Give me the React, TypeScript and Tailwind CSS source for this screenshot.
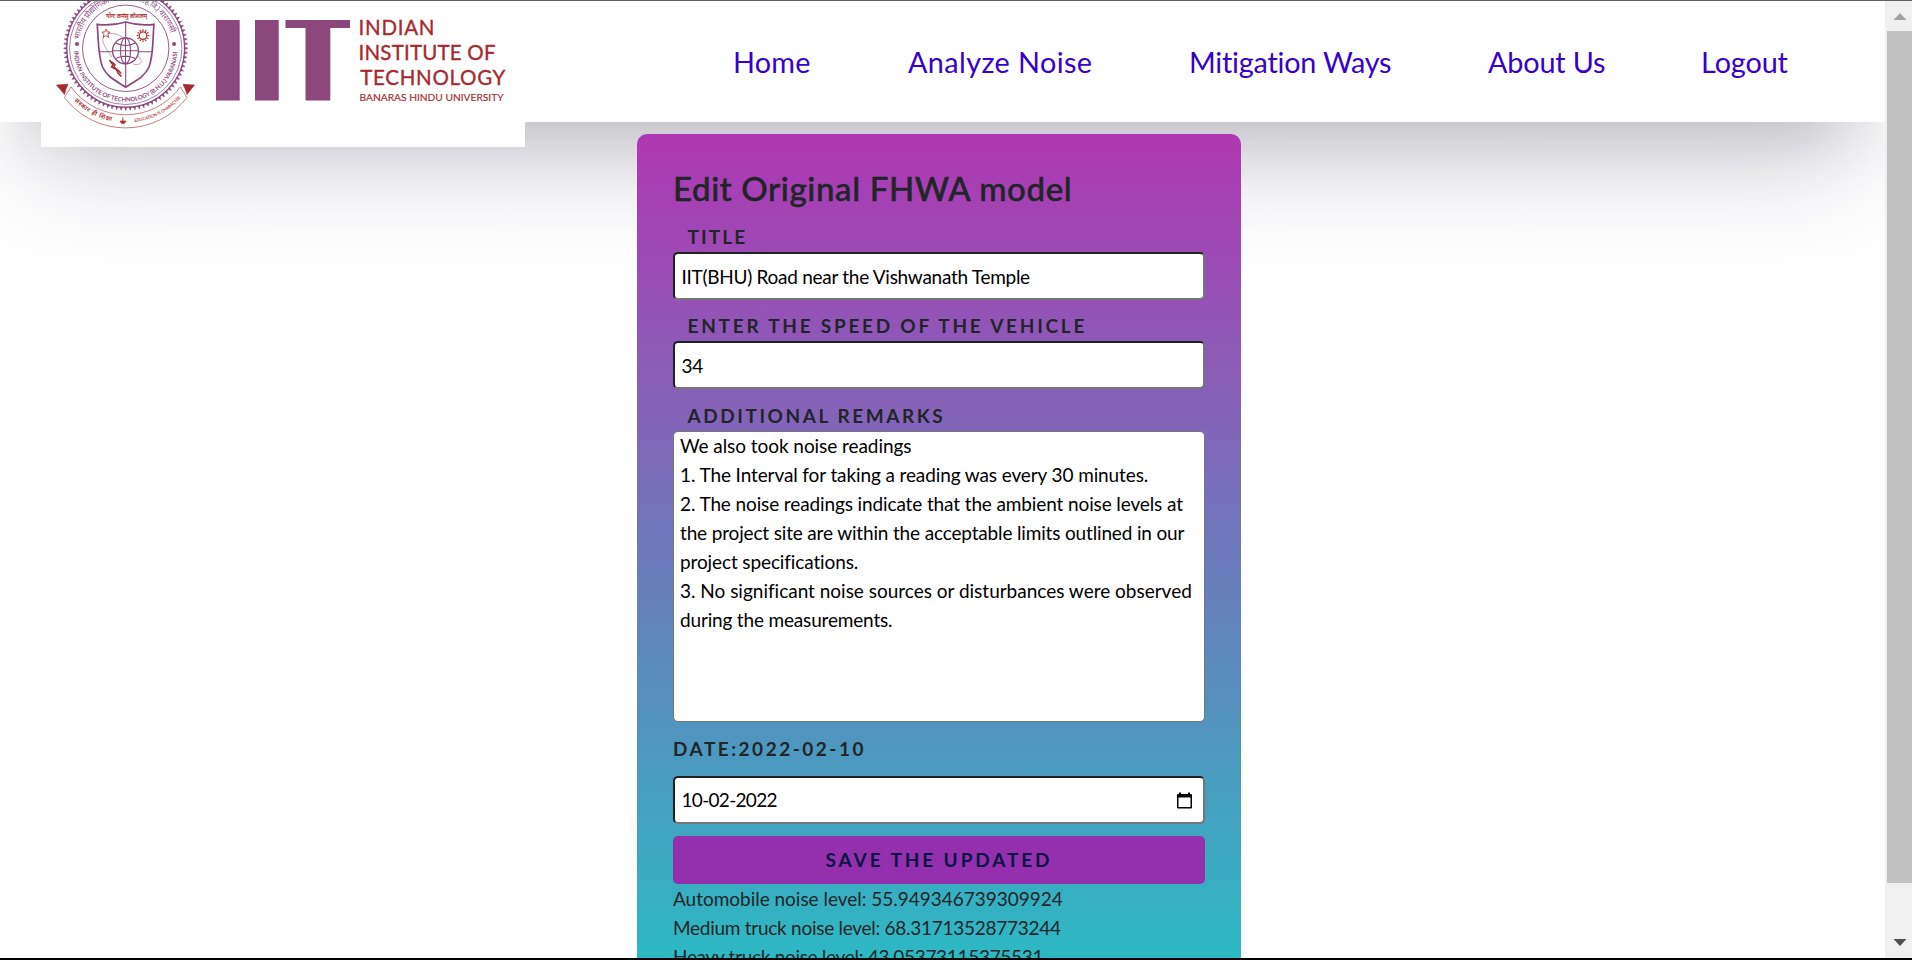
import React from "react";

const PURPLE = "#8c477c";
const RED = "#a8292d";

const navLinks = [
  { label: "Home", cls: "w-[175px] tracking-[0.2px]" },
  { label: "Analyze Noise", cls: "w-[281px] tracking-[0.4px]" },
  { label: "Mitigation Ways", cls: "w-[299px] tracking-[-0.22px]" },
  { label: "About Us", cls: "w-[213px] tracking-[-0.15px]" },
  { label: "Logout", cls: "w-[100px] tracking-[-0.1px]" },
];

const remarks = [
  { text: "We also took noise readings", cls: "tracking-[-0.06px]" },
  { text: "1. The Interval for taking a reading was every 30 minutes.", cls: "tracking-[-0.11px]" },
  { text: "2. The noise readings indicate that the ambient noise levels at", cls: "tracking-[-0.12px]" },
  { text: "the project site are within the acceptable limits outlined in our", cls: "tracking-[-0.16px]" },
  { text: "project specifications.", cls: "tracking-[-0.12px]" },
  { text: "3. No significant noise sources or disturbances were observed", cls: "tracking-[-0.01px]" },
  { text: "during the measurements.", cls: "tracking-[-0.17px]" },
];

const results = [
  { text: "Automobile noise level: 55.949346739309924", cls: "tracking-[-0.02px]" },
  { text: "Medium truck noise level: 68.31713528773244", cls: "tracking-[-0.27px]" },
  { text: "Heavy truck noise level: 43.05373115375531", cls: "tracking-[-0.31px]" },
];

function Logo() {
  const teeth = Array.from({ length: 84 }, (_, i) => (i * 360) / 84);
  const rays = Array.from({ length: 12 }, (_, i) => i * 30);
  return (
    <svg viewBox="41 1 484 146" className="block h-[146px] w-[484px] bg-white" fontFamily="Lato, 'Noto Sans', sans-serif">
      <defs>
        <path id="seal-top" d="M79.2 41 A46.8 46.8 0 0 1 172.2 41" />
        <path id="seal-bottom" d="M74.1 50 A51.6 51.6 0 0 0 177.3 50" />
        <path id="ribbon-text" d="M70 96.5 A73.5 73.5 0 0 0 182 96.5" />
      </defs>

      <g fill="none" stroke={PURPLE}>
        {teeth.map((a) => (
          <path key={a} d="M124.6 -10.8 L125.7 -13.8 L126.8 -10.8 Z" fill={PURPLE} strokeWidth="0.6" transform={`rotate(${a} 125.7 48.3)`} />
        ))}
        <circle cx="125.7" cy="48.3" r="58.9" strokeWidth="1.3" />
        <circle cx="125.7" cy="48.3" r="56.2" strokeWidth="0.7" />
        <circle cx="125.7" cy="48.3" r="43.2" strokeWidth="0.9" />
        <path d="M97.2 24.3 Q113 26 125.7 22 Q138.5 26 153.9 24.3 C152.5 43 153.5 55 149 67 C144.5 77 135 81 125.7 87.3 C116.5 81 107 77 102.5 67 C98 55 98.7 43 97.2 24.3 Z" strokeWidth="1.7" />
        <path d="M125.7 22 V87 M98.5 51.7 H152.5" strokeWidth="1.1" />
        <path d="M107 34 C122 31 131 44 136 57 M112 57 C104 47 101 40 104 36 M137 55 C144 61 142 66 133 64" strokeWidth="0.5" />
        <circle cx="125.5" cy="50.8" r="13" strokeWidth="1.3" fill="white" />
        <ellipse cx="125.5" cy="50.8" rx="5" ry="13" strokeWidth="1.1" />
        <path d="M125.5 37.8 V63.8 M112.5 50.8 H138.5 M115.5 43 Q125.5 48 135.5 43 M115.5 58.6 Q125.5 53.6 135.5 58.6" strokeWidth="1.1" />
      </g>

      <g fill={PURPLE}>
        <circle cx="77" cy="44" r="2" />
        <circle cx="174.1" cy="44" r="2" />
        <text fontSize="8">
          <textPath href="#seal-top" startOffset="1" textLength="127">भारतीय प्रौद्योगिकी संस्थान (का.हि.वि.) वाराणसी</textPath>
        </text>
        <text fontSize="6" fontWeight="700">
          <textPath href="#seal-bottom" startOffset="1" textLength="159">INDIAN INSTITUTE OF TECHNOLOGY (B.H.U.) VARANASI</textPath>
        </text>
      </g>

      <text x="106" y="18.3" fontSize="5.6" fontWeight="600" fill={RED} textLength="41">योगः कर्मसु कौशलम्</text>

      <g fill="none" stroke={RED} strokeWidth="0.8">
        {rays.map((a) => (
          <path key={a} d="M143 31 L143 29.3" strokeWidth="1.2" transform={`rotate(${a} 143 35.6)`} />
        ))}
        <circle cx="143" cy="35.6" r="3.8" strokeWidth="1.2" />
        <path d="M106 29 L107.3 32 H110 L108 34.2 L108.8 37.5 L106 35.7 L103.2 37.5 L104 34.2 L102 32 H104.7 Z" />
        <path d="M109.5 60 L113 65 L111.5 67 L116.5 69.5 L118 73 L121.5 76.5 M111 61.5 L115 64.5 L114 67 L119 71 L121 73.5" strokeWidth="1.5" />
      </g>

      <g stroke={RED} strokeWidth="0.6" fill="none">
        <path d="M71 87 A67.8 67.8 0 0 0 180.4 87 L187 97.5 A77 77 0 0 1 64.4 97.5 Z" />
        <path d="M56.500 85 L68 84.3 Q65.5 89 64.5 94.5 Z M194.5 85 L183 84.3 Q185.5 89 187 94.5 Z" fill={RED} />
        <path d="M122.8 117.5 V122" strokeWidth="1" />
        <path d="M120 121 H126 Q125 123.8 123 123.8 Q121 123.8 120 121 Z" fill={RED} />
      </g>
      <g fill={RED}>
        <text fontSize="6.2" fontWeight="600">
          <textPath href="#ribbon-text" startOffset="6" textLength="43">संस्कार ही शिक्षा</textPath>
        </text>
        <text fontSize="4.2" fontWeight="600">
          <textPath href="#ribbon-text" startOffset="72" textLength="53">EDUCATION IS CHARACTER</textPath>
        </text>
      </g>

      <path d="M216 20 H239.7 V100.6 H216 Z M255 20 H278.7 V100.6 H255 Z M285.5 20 H350 V28 H330.3 V100.6 H305.5 V28 H285.5 Z" fill={PURPLE} />
      <g fill={RED} stroke={RED} strokeWidth="0.35">
        <text x="358.5" y="35.2" fontSize="20.5" textLength="76">INDIAN</text>
        <text x="358.5" y="60" fontSize="20.5" textLength="137">INSTITUTE OF</text>
        <text x="360.3" y="84.7" fontSize="20.5" textLength="145">TECHNOLOGY</text>
        <text x="359.6" y="100.6" fontSize="10.4" strokeWidth="0.15" textLength="144" lengthAdjust="spacingAndGlyphs">
          BANARAS HINDU UNIVERSITY
        </text>
      </g>
    </svg>
  );
}

function Label({ children, className }: { children: React.ReactNode; className: string }) {
  return <div className={`h-7 text-[19px] leading-7 font-bold text-[#212529] ${className}`}>{children}</div>;
}

const fieldClass =
  "block h-12 w-full shrink-0 rounded-[5px] border-2 border-t-[#212121] border-l-[#212121] border-r-[#767676] border-b-[#767676] bg-white pl-[6.5px] text-[19px] text-black outline-none";

export default function App() {
  return (
    <div className="flex h-[960px] w-full flex-col overflow-hidden border-t border-b-2 border-t-[#5f5f63] border-b-black bg-white font-['Lato','Noto_Sans',sans-serif]">
      <div className="flex min-h-0 flex-1">
        <main className="min-w-0 flex-1 overflow-hidden">
          <header className="flex h-[121px] justify-between bg-white pl-[41px] shadow-[0_60px_120px_-24px_rgba(50,50,93,0.25),0_36px_72px_-36px_rgba(0,0,0,0.3)]">
            <div className="h-[146px] shrink-0">
              <Logo />
            </div>
            <nav className="flex pt-[39px] pr-[84px]">
              {navLinks.map((l) => (
                <a key={l.label} href="#" className={`h-11 text-[28.8px] leading-[44px] whitespace-nowrap text-[#3700cc] ${l.cls}`}>
                  {l.label}
                </a>
              ))}
            </nav>
          </header>

          <form className="relative mt-3 ml-[637px] flex h-[900px] w-[604px] flex-col rounded-[10px] bg-[linear-gradient(180deg,#b037b3_0px,#28bdc3_850px)] px-9 pt-[34px]">
            <h1 className="h-10 text-[33px] leading-10 font-medium tracking-[0.62px] text-[#212529] [-webkit-text-stroke:0.5px_#212529]">
              Edit Original FHWA model
            </h1>

            <Label className="mt-[15px] pl-[14.5px] tracking-[2.1px]">TITLE</Label>
            <input className={`${fieldClass} mt-px tracking-[-0.28px]`} defaultValue="IIT(BHU) Road near the Vishwanath Temple" />

            <Label className="mt-3 pl-[14.5px] tracking-[2.75px]">ENTER THE SPEED OF THE VEHICLE</Label>
            <input className={`${fieldClass} mt-px tracking-[-0.2px]`} defaultValue="34" />

            <Label className="mt-[13px] pl-[14.5px] tracking-[2.55px]">ADDITIONAL REMARKS</Label>
            <div className="mt-px h-[291px] rounded-[5px] border border-[#767676] bg-white pl-[6px] text-[19px] leading-[29px] text-black">
              <div className="-mt-px">
                {remarks.map((r) => (
                  <p key={r.text} className={`whitespace-nowrap ${r.cls}`}>
                    {r.text}
                  </p>
                ))}
              </div>
            </div>

            <Label className="mt-[13px] tracking-[2.5px]">DATE:2022-02-10</Label>
            <div className={`${fieldClass} mt-[13px]`}>
              <div className="flex h-full items-center justify-between pr-[11px]">
                <span className="tracking-[-0.7px]">10-02-2022</span>
                <svg viewBox="0 0 15 17" className="h-[17px] w-[15px]">
                  <path d="M2 0.5 H4 V2 H11 V0.5 H13 V2 H14 Q15 2 15 3 V15.5 Q15 16.5 14 16.5 H1 Q0 16.5 0 15.5 V3 Q0 2 1 2 H2 Z M1.5 5.5 V15 H13.5 V5.5 Z" fill="black" fillRule="evenodd" />
                </svg>
              </div>
            </div>

            <button type="button" className="mt-3 h-12 shrink-0 rounded-[5px] bg-[#9430ae] text-[19px] font-bold tracking-[2.9px] text-[#0a1446]">
              SAVE THE UPDATED
            </button>

            <div className="text-[19px] leading-[29px] text-[#212529]">
              {results.map((r) => (
                <p key={r.text} className={r.cls}>
                  {r.text}
                </p>
              ))}
            </div>
          </form>
        </main>

        <div className="flex w-[27px] shrink-0 flex-col justify-between bg-[#f0f0f0] pl-0.5">
          <svg viewBox="0 0 25 30" className="h-[30px] w-[25px] shrink-0">
            <path d="M6.5 19 L13 12 L19.5 19 Z" fill="#a3a3a3" />
          </svg>
          <div className="h-[852px] bg-[#c1c1c1]" />
          <div className="flex-1" />
          <svg viewBox="0 0 25 30" className="h-[30px] w-[25px] shrink-0">
            <path d="M6.5 11 H19.5 L13 18 Z" fill="#505050" />
          </svg>
        </div>
      </div>
    </div>
  );
}
